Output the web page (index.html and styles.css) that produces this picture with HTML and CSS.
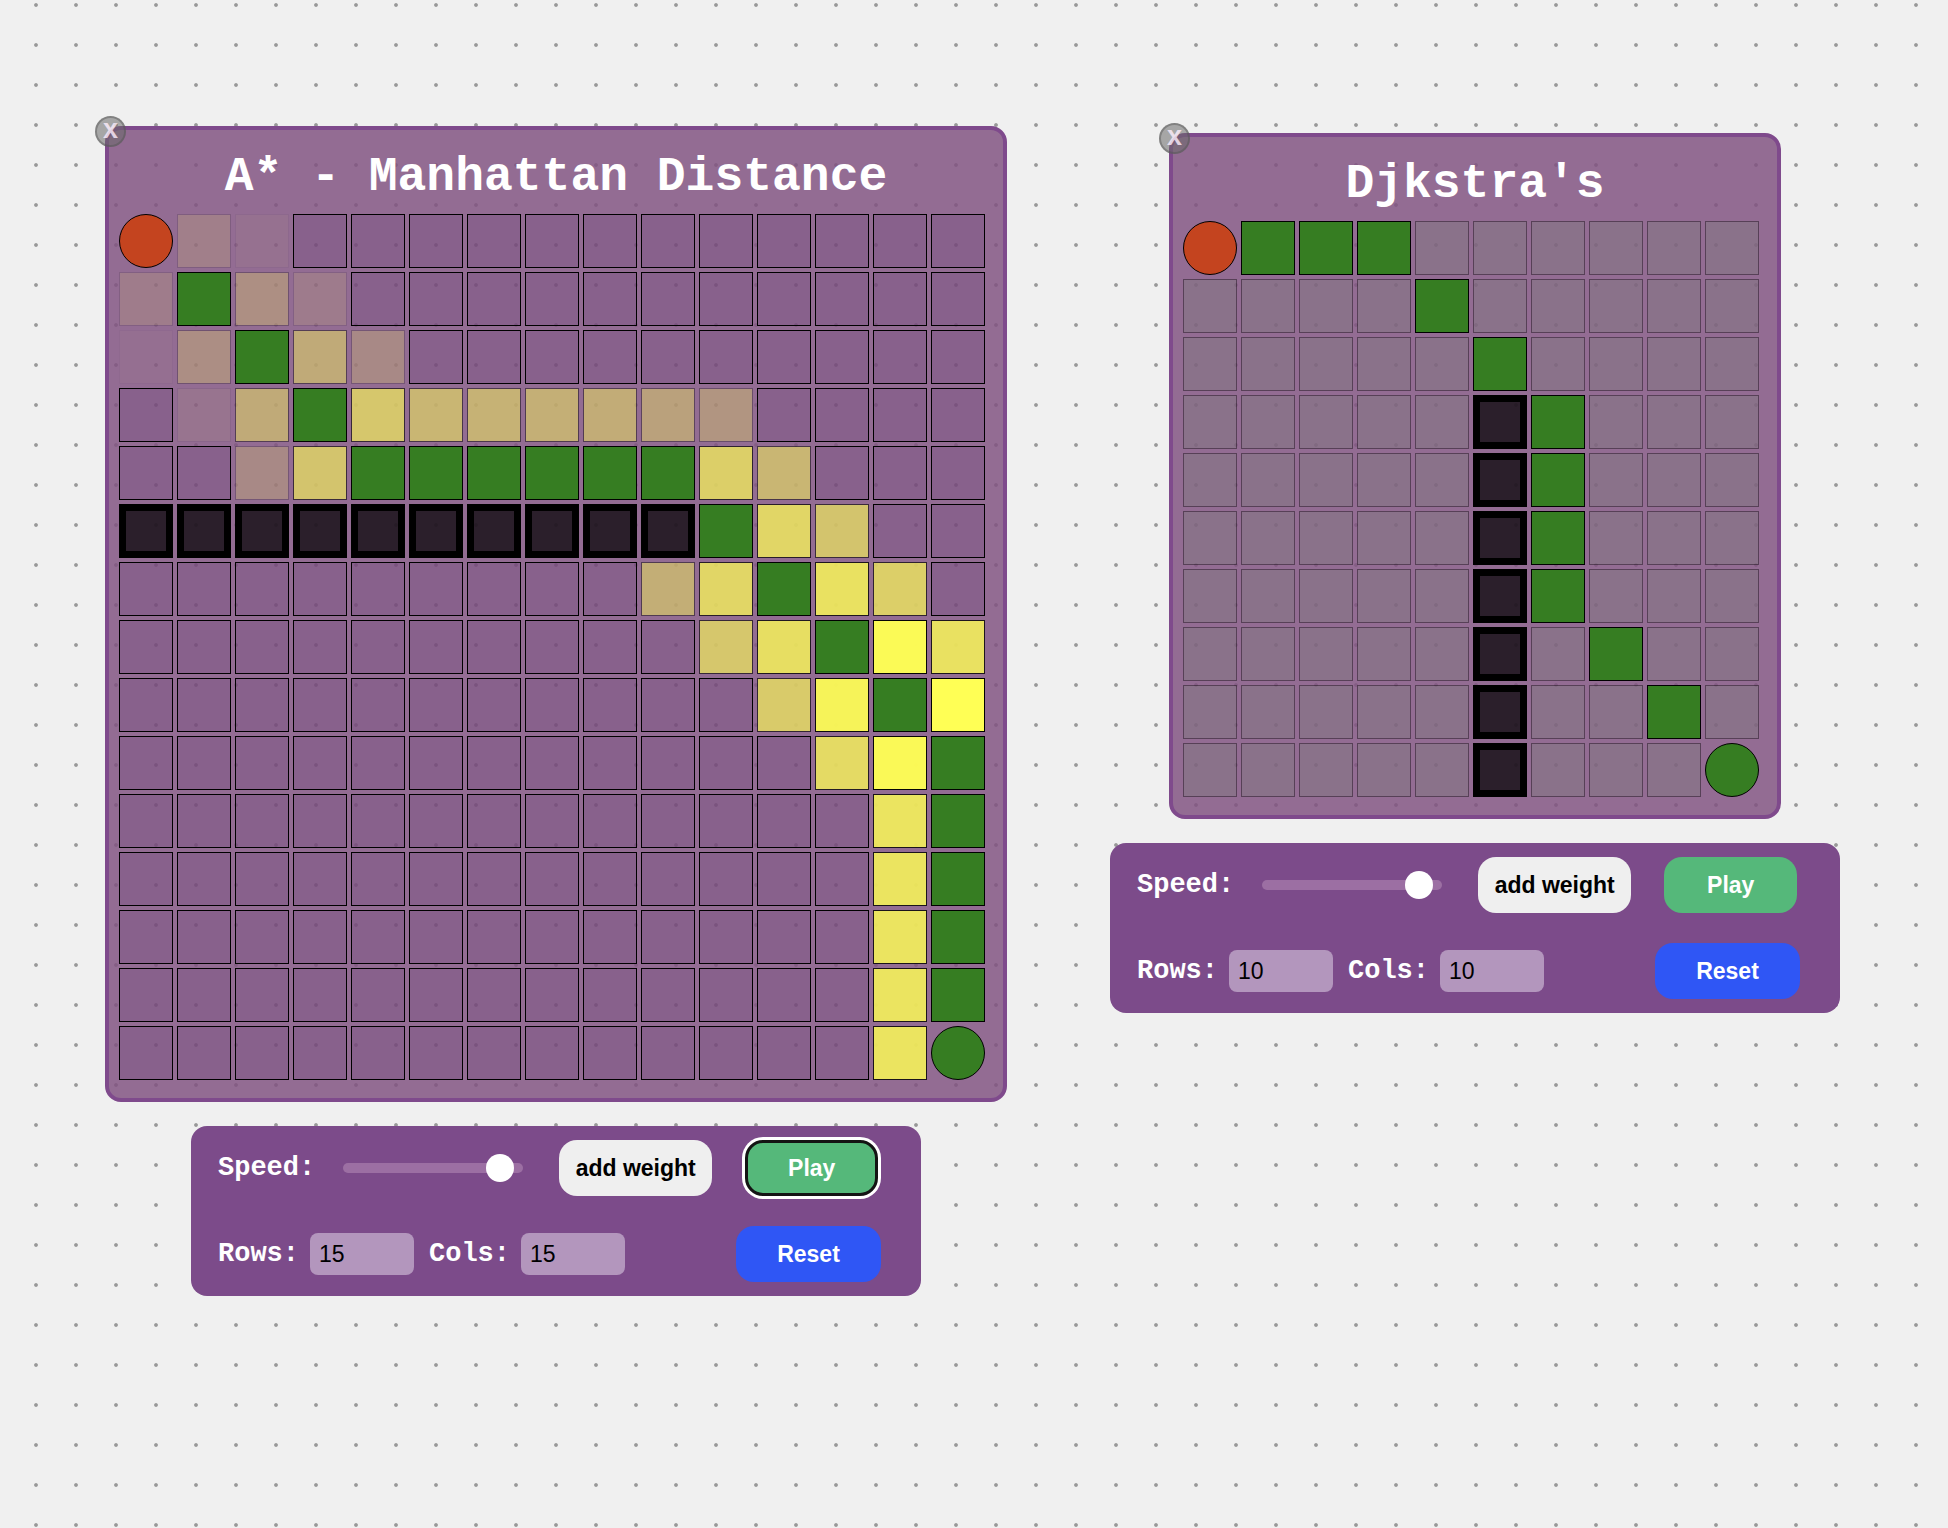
FILE: index.html
```html
<!DOCTYPE html>
<html lang="en">
<head>
<meta charset="utf-8">
<title>Pathfinding Visualizer</title>
<link rel="stylesheet" href="styles.css">
</head>
<body>
  <div class="window win-astar">
    <div class="board">
      <div class="close">x</div>
      <div class="board-title">A* - Manhattan Distance</div>
      <div class="grid grid-15" id="grid-astar"></div>
    </div>
    <div class="controls">
      <div class="row">
        <span class="label">Speed:</span>
        <input class="slider" type="range" min="0" max="100" value="94">
        <button class="btn btn-weight">add weight</button>
        <button class="btn btn-play active">Play</button>
      </div>
      <div class="row">
        <span class="label">Rows:</span>
        <input class="num" type="text" value="15">
        <span class="label label-cols">Cols:</span>
        <input class="num" type="text" value="15">
        <button class="btn btn-reset">Reset</button>
      </div>
    </div>
  </div>

  <div class="window win-dijk">
    <div class="board">
      <div class="close">x</div>
      <div class="board-title">Djkstra's</div>
      <div class="grid grid-10" id="grid-dijk"></div>
    </div>
    <div class="controls">
      <div class="row">
        <span class="label">Speed:</span>
        <input class="slider" type="range" min="0" max="100" value="94">
        <button class="btn btn-weight">add weight</button>
        <button class="btn btn-play">Play</button>
      </div>
      <div class="row">
        <span class="label">Rows:</span>
        <input class="num" type="text" value="10">
        <span class="label label-cols">Cols:</span>
        <input class="num" type="text" value="10">
        <button class="btn btn-reset">Reset</button>
      </div>
    </div>
  </div>
  <script src="script.js"></script>
</body>
</html>
```

FILE: styles.css
```css
html, body {
  margin: 0;
  padding: 0;
}

body {
  width: 1948px;
  height: 1528px;
  position: relative;
  overflow: hidden;
  background-color: #f0f0f0;
  background-image: radial-gradient(circle, #989898 0, #989898 1.4px, rgba(152, 152, 152, 0) 2.3px);
  background-size: 40px 40px;
  background-position: 16px -15px;
  font-family: "Liberation Sans", Arial, sans-serif;
}

.window {
  position: absolute;
  display: flex;
  flex-direction: column;
  align-items: center;
}

.win-astar {
  left: 105px;
  top: 126px;
}

.win-dijk {
  left: 1110px;
  top: 133px;
}

.board {
  position: relative;
  border: 4px solid #7f4a8c;
  border-radius: 16px;
  background: rgba(128, 80, 128, 0.83);
  padding: 0 18px 18px 10px;
}

.board-title {
  height: 84px;
  box-sizing: border-box;
  padding-top: 10px;
  line-height: 74px;
  margin: 0 -18px 0 -10px;
  text-align: center;
  font-family: "Liberation Mono", "Courier New", monospace;
  font-weight: bold;
  font-size: 48px;
  color: #ffffff;
  white-space: nowrap;
}

.close {
  position: absolute;
  left: -14px;
  top: -14px;
  width: 31px;
  height: 31px;
  box-sizing: border-box;
  border-radius: 50%;
  border: 2px solid rgba(85, 85, 85, 0.45);
  background: rgba(105, 105, 105, 0.55);
  color: rgba(255, 240, 255, 0.8);
  font-family: "Liberation Sans", Arial, sans-serif;
  font-weight: bold;
  font-size: 27px;
  line-height: 22px;
  text-align: center;
  z-index: 2;
}

.grid {
  display: grid;
  gap: 4px;
  grid-auto-rows: 54px;
}

.grid-15 {
  grid-template-columns: repeat(15, 54px);
}

.grid-10 {
  grid-template-columns: repeat(10, 54px);
}

.cell {
  box-sizing: border-box;
  border: 1px solid #000;
  background: rgba(40, 0, 80, 0.1);
}

.cell.visited {
  background: rgb(255, 255, 85);
}

.cell.seen {
  background: #7d7d7d;
  opacity: 0.4;
}

.cell.path {
  background: #367d22;
}

.cell.wall {
  border: 7px solid #000;
  background: rgba(0, 0, 0, 0.71);
}

.cell.start {
  background: #c4441f;
  border-radius: 50%;
}

.cell.end {
  background: #367d22;
  border-radius: 50%;
}

.controls {
  margin-top: 24px;
  width: 730px;
  height: 170px;
  box-sizing: border-box;
  padding: 14px 40px 14px 27px;
  background: #7c4b8a;
  border-radius: 16px;
  display: flex;
  flex-direction: column;
  justify-content: space-between;
}

.row {
  display: flex;
  align-items: center;
  height: 56px;
}

.label {
  font-family: "Liberation Mono", "Courier New", monospace;
  font-weight: bold;
  font-size: 27px;
  color: #ffffff;
  white-space: nowrap;
}

.label-cols {
  margin-left: 15px;
}

.slider {
  -webkit-appearance: none;
  appearance: none;
  margin: 0 0 0 28px;
  width: 180px;
  height: 28px;
  background: transparent;
  outline: none;
  padding: 0;
}

.slider::-webkit-slider-runnable-track {
  height: 10px;
  background: #9c6fa3;
  border-radius: 5px;
}

.slider::-webkit-slider-thumb {
  -webkit-appearance: none;
  appearance: none;
  margin-top: -9px;
  width: 28px;
  height: 28px;
  border-radius: 50%;
  background: #ffffff;
  border: none;
}

.btn {
  height: 56px;
  box-sizing: border-box;
  border: none;
  border-radius: 18px;
  padding: 0;
  font-family: "Liberation Sans", Arial, sans-serif;
  font-weight: bold;
  font-size: 23px;
}

.btn-weight {
  margin-left: 36px;
  width: 153px;
  background: #efefef;
  color: #000;
}

.btn-play {
  margin-left: 33px;
  width: 133px;
  background: #55b87a;
  color: #fff;
}

.btn-play.active {
  border: 3px solid #141414;
  box-shadow: 0 0 0 3px #ffffff;
}

.btn-reset {
  margin-left: auto;
  width: 145px;
  background: #2f56f5;
  color: #fff;
}

.num {
  margin-left: 11px;
  width: 104px;
  height: 42px;
  box-sizing: border-box;
  border: none;
  border-radius: 8px;
  padding: 0 9px;
  background: #b396bd;
  color: #000;
  font-family: "Liberation Sans", Arial, sans-serif;
  font-size: 23px;
  outline: none;
}
```

FILE: script.js
```js
(function () {
  function rep(t, n) {
    var a = [];
    for (var i = 0; i < n; i++) a.push(t);
    return a.join(' ');
  }
  var astar = [
    "s .13 .03 " + rep('n', 12),
    ".11 g .24 .10 " + rep('n', 11),
    ".02 .23 g .42 .2 " + rep('n', 10),
    "n .05 .42 g .62 .5 .48 .46 .44 .36 .28 n n n n",
    "n n .2 .6 g g g g g g .68 .5 n n n",
    rep('w', 10) + " g .72 .6 n n",
    rep('n', 9) + " .45 .72 g .8 .68 n",
    rep('n', 10) + " .62 .78 g .97 .8",
    rep('n', 11) + " .65 .92 g 1",
    rep('n', 12) + " .75 .96 g",
    rep('n', 13) + " .82 g",
    rep('n', 13) + " .82 g",
    rep('n', 13) + " .82 g",
    rep('n', 13) + " .82 g",
    rep('n', 13) + " .82 e"
  ];
  var dijk = [
    "s g g g v v v v v v",
    "v v v v g v v v v v",
    "v v v v v g v v v v",
    "v v v v v w g v v v",
    "v v v v v w g v v v",
    "v v v v v w g v v v",
    "v v v v v w g v v v",
    "v v v v v w v g v v",
    "v v v v v w v v g v",
    "v v v v v w v v v e"
  ];
  var kinds = { n: '', g: 'path', w: 'wall', s: 'start', e: 'end', v: 'seen' };
  function build(id, rows) {
    var grid = document.getElementById(id);
    rows.forEach(function (r) {
      r.split(' ').forEach(function (t) {
        var d = document.createElement('div');
        d.className = 'cell';
        if (kinds.hasOwnProperty(t)) {
          if (kinds[t]) d.classList.add(kinds[t]);
        } else {
          d.classList.add('visited');
          d.style.opacity = t;
        }
        grid.appendChild(d);
      });
    });
  }
  build('grid-astar', astar);
  build('grid-dijk', dijk);
})();
```
